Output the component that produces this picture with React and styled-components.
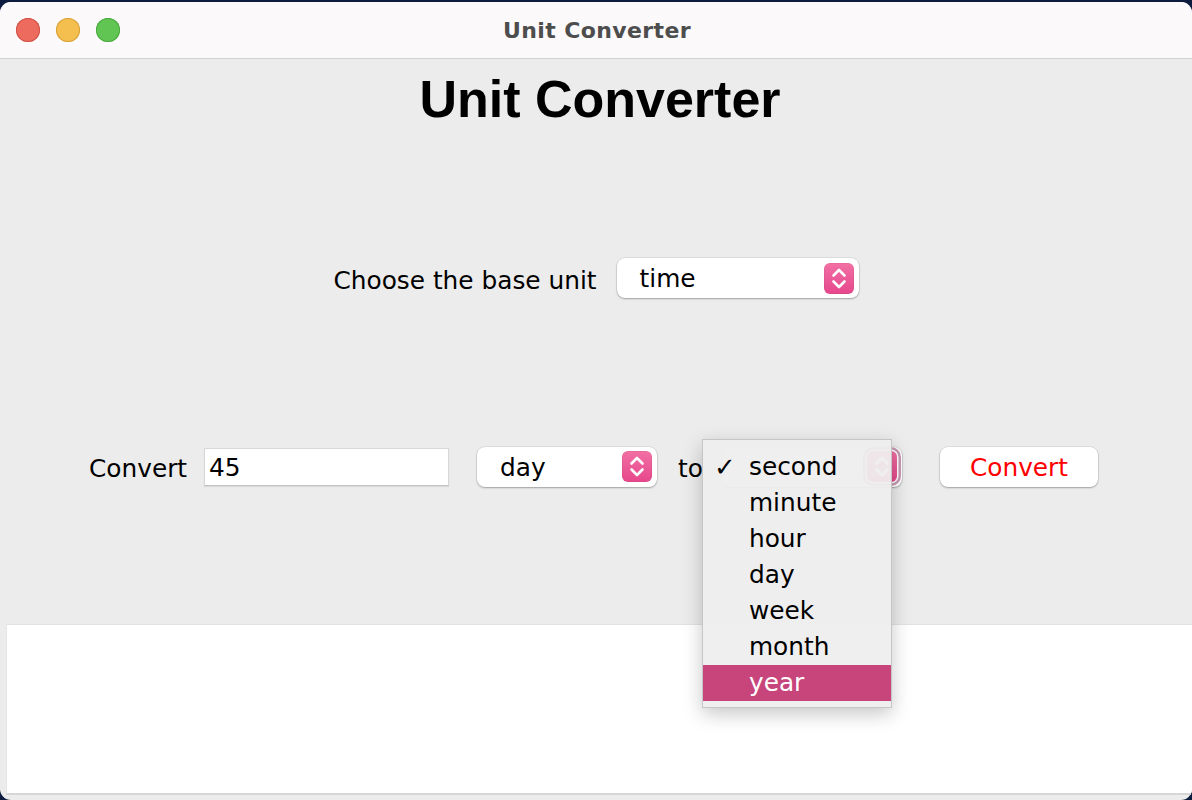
import React from 'react'
import styled, { createGlobalStyle } from 'styled-components'

const units = ['second', 'minute', 'hour', 'day', 'week', 'month', 'year']

const GlobalStyle = createGlobalStyle`
  html, body {
    margin: 0;
    padding: 0;
    background: #0c1d40;
  }
  * {
    box-sizing: border-box;
  }
`

const Chevrons = () => (
  <svg width="30" height="31" viewBox="0 0 30 31" fill="none">
    <path d="M9.5 12.5 L15 7 L20.5 12.5" stroke="#fff" strokeWidth="2.6" strokeLinecap="round" strokeLinejoin="round" />
    <path d="M9.5 18.5 L15 24 L20.5 18.5" stroke="#fff" strokeWidth="2.6" strokeLinecap="round" strokeLinejoin="round" />
  </svg>
)

const Combo = ({ value, width, left, focused, children }) => (
  <ComboBox $width={width} $left={left}>
    <ComboText>{value}</ComboText>
    <Stepper $focused={focused}>
      <Chevrons />
    </Stepper>
    {children}
  </ComboBox>
)

const App = () => {
  return <Desktop>
    <GlobalStyle />
    <Window>
      <TitleBar>
        <Lights>
          <Light $color='#ec6a5e' $edge='#d05247' />
          <Light $color='#f5bf4f' $edge='#d6a13a' />
          <Light $color='#61c554' $edge='#4aa83e' />
        </Lights>
        <WindowTitle>Unit Converter</WindowTitle>
      </TitleBar>
      <Content>
        <Heading>Unit Converter</Heading>
        <BaseRow>
          <Label $nudge={2}>Choose the base unit</Label>
          <Combo value='time' width={242} left={20} />
        </BaseRow>
        <ConvertRow>
          <Label $nudge={2}>Convert</Label>
          <Field $left={17}>45</Field>
          <Combo value='day' width={180} left={28} />
          <Label $nudge={2} $left={21}>to</Label>
          <Combo value='' width={180} left={19} focused>
            <Popup>
              {units.map((unit) => {
                return <MenuItem key={unit} $active={unit === 'year'}>
                  <Check>{unit === 'second' ? '✓' : ''}</Check>
                  {unit}
                </MenuItem>
              })}
            </Popup>
          </Combo>
          <Button>Convert</Button>
        </ConvertRow>
        <Output />
      </Content>
    </Window>
  </Desktop>
}

const Desktop = styled.div`
  width: 1192px;
  height: 800px;
  padding-top: 2px;
  background: #0c1d40;
  overflow: hidden;
`

const Window = styled.div`
  height: 798px;
  display: flex;
  flex-direction: column;
  border-radius: 11px;
  overflow: hidden;
  background: #ececec;
`

const TitleBar = styled.div`
  position: relative;
  height: 57px;
  flex-shrink: 0;
  display: flex;
  align-items: center;
  justify-content: center;
  background: #fbf9fa;
  border-bottom: 1px solid #d2d2d2;
`

const Lights = styled.div`
  position: absolute;
  left: 16px;
  top: 16px;
  display: flex;
  gap: 16px;
`

const Light = styled.span`
  width: 24px;
  height: 24px;
  border-radius: 50%;
  background: ${(p) => p.$color};
  box-shadow: inset 0 0 0 1px ${(p) => p.$edge};
`

const WindowTitle = styled.div`
  font-family: "DejaVu Sans", sans-serif;
  font-weight: bold;
  font-size: 22px;
  letter-spacing: 0.4px;
  color: #4d4d4d;
  margin-left: 2px;
`

const Content = styled.div`
  flex: 1;
  display: flex;
  flex-direction: column;
  font-family: "DejaVu Sans", "Liberation Sans", sans-serif;
  font-size: 24.8px;
  color: #000;
`

const Heading = styled.h1`
  margin: 10px 0 0;
  height: 60px;
  line-height: 60px;
  text-align: center;
  font-family: "Liberation Sans", Arial, sans-serif;
  font-weight: bold;
  font-size: 52px;
  padding-left: 8px;
`

const BaseRow = styled.div`
  margin-top: 129px;
  height: 40px;
  display: flex;
  align-items: center;
  justify-content: center;
  padding-left: 0;
`

const ConvertRow = styled.div`
  margin-top: 148px;
  height: 41px;
  display: flex;
  align-items: center;
  padding-left: 89px;
`

const Label = styled.span`
  white-space: nowrap;
  margin-left: ${(p) => p.$left || 0}px;
  padding-top: ${(p) => (p.$nudge || 0) * 2}px;
`

const ComboBox = styled.div`
  position: relative;
  width: ${(p) => p.$width}px;
  height: 40px;
  margin-left: ${(p) => p.$left || 0}px;
  flex-shrink: 0;
  display: flex;
  align-items: center;
  justify-content: space-between;
  padding: 0 5px 0 23px;
  background: #fff;
  border-radius: 8px;
  box-shadow: 0 0 0 0.5px rgba(0, 0, 0, 0.12), 0 1px 2px rgba(0, 0, 0, 0.28);
`

const ComboText = styled.span`
  padding-top: 1px;
`

const Stepper = styled.span`
  width: 30px;
  height: 31px;
  display: grid;
  place-items: center;
  border-radius: 6px;
  background: linear-gradient(#f270a4, #e6478c);
  box-shadow: ${(p) => (p.$focused
    ? '0 0 0 1.5px #fff, 0 0 0 4px #c79ab2'
    : 'inset 0 0 0 0.5px rgba(0,0,0,0.08)')};
`

const Field = styled.div`
  width: 245px;
  height: 38px;
  margin-left: ${(p) => p.$left}px;
  display: flex;
  align-items: center;
  padding: 2px 0 0 4px;
  background: #fff;
  border: 1px solid #d7d7d7;
  border-bottom-color: #c4c4c4;
  box-shadow: 0 1px 1px rgba(0, 0, 0, 0.08);
`

const Button = styled.button`
  width: 158px;
  height: 40px;
  margin-left: 38px;
  padding: 2px 0 0;
  border: none;
  border-radius: 8px;
  background: #fff;
  box-shadow: 0 0 0 0.5px rgba(0, 0, 0, 0.12), 0 1px 2px rgba(0, 0, 0, 0.28);
  font-family: "DejaVu Sans", sans-serif;
  font-size: 24.8px;
  color: #ff0000;
`

const Popup = styled.div`
  position: absolute;
  left: -20px;
  top: -8px;
  width: 190px;
  height: 269px;
  padding: 9px 0 7px;
  display: flex;
  flex-direction: column;
  background: rgba(238, 238, 238, 0.94);
  border: 1px solid #c6c6c6;
  box-shadow: 0 6px 18px rgba(0, 0, 0, 0.22);
  z-index: 5;
`

const MenuItem = styled.div`
  height: 36px;
  line-height: 36px;
  display: flex;
  padding-left: 11px;
  background: ${(p) => (p.$active ? '#c8457c' : 'transparent')};
  color: ${(p) => (p.$active ? '#fff' : '#000')};
`

const Check = styled.span`
  width: 35px;
  font-size: 26px;
  font-weight: bold;
`

const Output = styled.div`
  margin: 137px 0 0 6px;
  height: 171px;
  background: #fff;
  border-top: 1px solid #e2e2e2;
  border-left: 1px solid #e6e6e6;
  border-bottom: 2px solid #d6d6d6;
`

export default App
